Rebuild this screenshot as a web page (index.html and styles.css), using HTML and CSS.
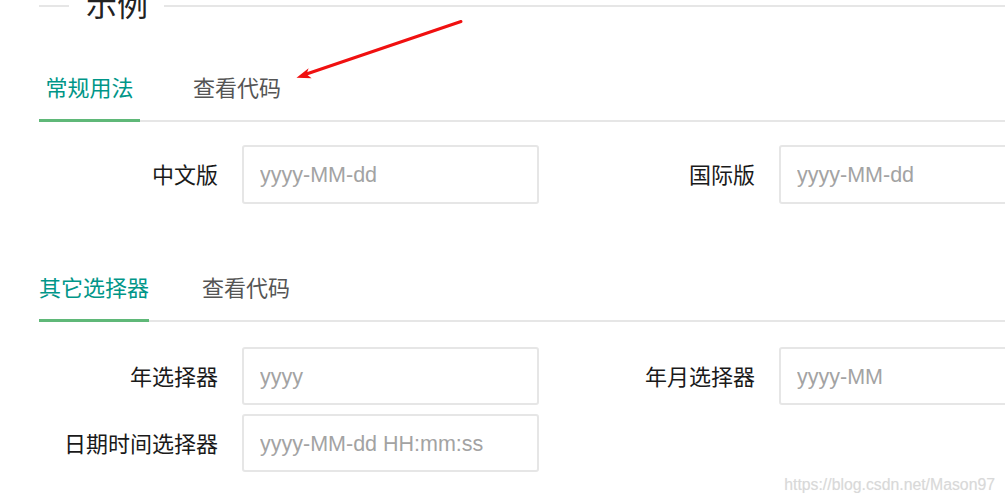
FILE: index.html
```html
<!DOCTYPE html>
<html lang="zh-CN">
<head>
<meta charset="utf-8">
<title>示例</title>
<link rel="stylesheet" href="styles.css">
</head>
<body>
<div class="page">
  <div class="legend-row">
    <span class="legend-line short"></span>
    <span class="legend">示例</span>
    <span class="legend-line long"></span>
  </div>

  <section class="tab-section first">
    <ul class="tab-title">
      <li class="tab active wide">常规用法</li>
      <li class="tab">查看代码</li>
    </ul>
    <div class="form">
      <div class="form-row tall">
        <div class="field">
          <label class="label">中文版</label>
          <input class="input" type="text" placeholder="yyyy-MM-dd">
        </div>
        <div class="field">
          <label class="label">国际版</label>
          <input class="input" type="text" placeholder="yyyy-MM-dd">
        </div>
      </div>
    </div>
  </section>

  <section class="tab-section second">
    <ul class="tab-title">
      <li class="tab active">其它选择器</li>
      <li class="tab">查看代码</li>
    </ul>
    <div class="form">
      <div class="form-row">
        <div class="field">
          <label class="label">年选择器</label>
          <input class="input" type="text" placeholder="yyyy">
        </div>
        <div class="field">
          <label class="label">年月选择器</label>
          <input class="input" type="text" placeholder="yyyy-MM">
        </div>
      </div>
      <div class="form-row">
        <div class="field">
          <label class="label">日期时间选择器</label>
          <input class="input" type="text" placeholder="yyyy-MM-dd HH:mm:ss">
        </div>
      </div>
    </div>
  </section>
</div>

<svg class="arrow" width="1005" height="502" viewBox="0 0 1005 502">
  <line x1="461" y1="21.5" x2="305" y2="74.5" stroke="#f01010" stroke-width="3" stroke-linecap="round"/>
  <polygon points="296.5,77.8 308.6,68.3 306.5,74.2 311.6,78.2" fill="#f01010"/>
</svg>

<div class="watermark">https://blog.csdn.net/Mason97</div>
</body>
</html>
```

FILE: styles.css
```css
html, body {
  margin: 0;
  padding: 0;
  width: 1005px;
  height: 502px;
  overflow: hidden;
  background: #fff;
}

body {
  position: relative;
  font-family: "Liberation Sans", "Noto Sans CJK SC", sans-serif;
  color: #333;
}

.page {
  width: 1160px;
  padding-left: 39px;
}

.legend-row {
  display: flex;
  align-items: center;
  height: 30px;
  margin-top: -9px;
}

.legend-line {
  height: 2px;
  background: #e6e6e6;
}

.legend-line.short {
  width: 30px;
}

.legend-line.long {
  flex: 1;
}

.legend {
  padding: 0 16px 0 17px;
  font-size: 31px;
  line-height: 30px;
  color: #222;
}

.tab-section.first {
  margin-top: 39px;
}

.tab-section.second {
  margin-top: 56px;
}

.tab-title {
  display: flex;
  gap: 53px;
  margin: 0;
  padding: 0;
  list-style: none;
  height: 60px;
  border-bottom: 2px solid #e6e6e6;
}

.tab {
  position: relative;
  font-size: 22px;
  line-height: 58px;
  color: #555;
  text-align: center;
  white-space: nowrap;
}

.tab.wide {
  width: 101px;
}

.tab.active {
  color: #009688;
}

.tab.active::after {
  content: "";
  position: absolute;
  left: 0;
  right: 0;
  bottom: -2px;
  height: 3px;
  background: #5fb878;
}

.first .form {
  padding-top: 23px;
}

.second .form {
  padding-top: 25px;
}

.form {
  display: flex;
  flex-direction: column;
  gap: 9px;
}

.form-row {
  display: flex;
  gap: 37px;
  height: 58px;
}

.form-row.tall {
  height: 59px;
}

.field {
  display: flex;
  align-items: center;
  gap: 24px;
}

.label {
  width: 179px;
  padding-bottom: 3px;
  text-align: right;
  font-size: 22px;
  color: #1a1a1a;
  white-space: nowrap;
}

.input {
  box-sizing: border-box;
  width: 297px;
  height: 100%;
  margin: 0;
  padding: 2px 10px 0 16px;
  border: 2px solid #e6e6e6;
  border-radius: 3px;
  background: #fff;
  font-family: "Liberation Sans", "Noto Sans CJK SC", sans-serif;
  font-size: 21.5px;
  color: #333;
  outline: none;
}

.input::placeholder {
  color: #a3a3a3;
}

.arrow {
  position: absolute;
  left: 0;
  top: 0;
  pointer-events: none;
}

.watermark {
  position: absolute;
  right: 10px;
  bottom: 8px;
  font-family: "Liberation Sans", sans-serif;
  font-size: 15.8px;
  color: #d9d9d9;
  text-shadow: 0 0 1px #eee;
  white-space: nowrap;
}
```
